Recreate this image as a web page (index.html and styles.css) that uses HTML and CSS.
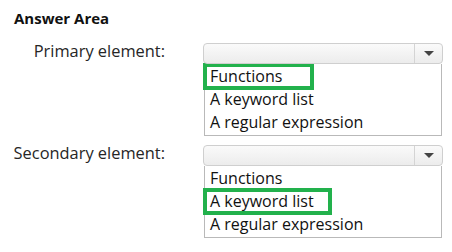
FILE: index.html
```html
<!DOCTYPE html>
<html lang="en">
<head>
  <meta charset="UTF-8">
  <title>Answer Area</title>
  <link rel="stylesheet" href="styles.css">
</head>
<body>
  <h1 class="title">Answer Area</h1>

  <div class="form">
    <div class="label">Primary element:</div>
    <div class="control">
      <div class="select"><span class="arrow"></span></div>
      <div class="options">
        <div class="option"><span class="pick pick-1">Functions</span></div>
        <div class="option">A keyword list</div>
        <div class="option">A regular expression</div>
      </div>
    </div>

    <div class="label">Secondary element:</div>
    <div class="control">
      <div class="select"><span class="arrow"></span></div>
      <div class="options">
        <div class="option">Functions</div>
        <div class="option"><span class="pick pick-2">A keyword list</span></div>
        <div class="option">A regular expression</div>
      </div>
    </div>
  </div>
</body>
</html>
```

FILE: styles.css
```css
body { margin: 0; padding: 8px 0 0 10px; background: #fff; font-family: "Open Sans", Arial, sans-serif; color: #222; }
.title { margin: 0 0 0 4px; font-size: 15px; line-height: 20px; font-weight: 700; color: #111; }

.form { display: grid; grid-template-columns: 155px 240px; column-gap: 38px; row-gap: 9px; margin-top: 15px; }
.label { text-align: right; white-space: nowrap; font-size: 16.4px; line-height: 16px; color: #262626; }

.select { position: relative; height: 19px; border: 1px solid #cfcfcf; border-radius: 4px; background: linear-gradient(#fafafa, #ececec); }
.arrow { position: absolute; right: 0; top: 0; bottom: 0; width: 27px; border-left: 1px solid #d4d4d4; }
.arrow::after { content: ""; position: absolute; left: 9px; top: 7px; border-left: 5px solid transparent; border-right: 5px solid transparent; border-top: 5px solid #444; }

.options { margin-left: 1px; width: 236px; padding: 1px 0; border: 1px solid #b9b9b9; border-top: none; }
.option { height: 23px; line-height: 23px; padding-left: 5px; font-size: 16px; color: #111; white-space: nowrap; }

.pick { display: inline-block; margin-left: -5px; padding-left: 5px; height: 23px; outline: 4px solid #22b14c; outline-offset: -2px; }
.pick-1 { width: 102px; }
.pick-2 { width: 120px; }
```
